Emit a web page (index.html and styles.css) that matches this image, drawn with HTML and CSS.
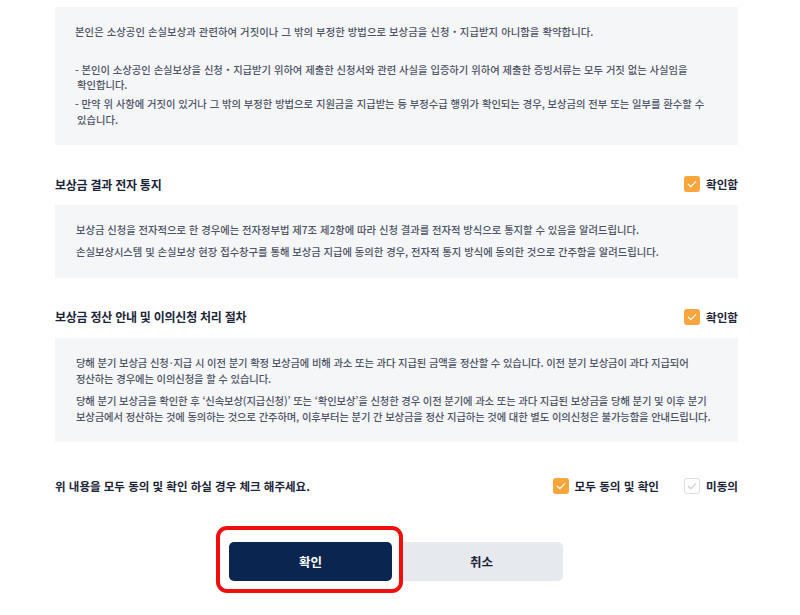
FILE: index.html
```html
<!DOCTYPE html>
<html lang="ko">
<head>
<meta charset="utf-8">
<link rel="stylesheet" href="styles.css">
</head>
<body>
<div class="wrap">
  <div class="box box-first">
    <p class="lead">본인은 소상공인 손실보상과 관련하여 거짓이나 그 밖의 부정한 방법으로 보상금을 신청・지급받지 아니함을 확약합니다.</p>
    <p class="item">- 본인이 소상공인 손실보상을 신청・지급받기 위하여 제출한 신청서와 관련 사실을 입증하기 위하여 제출한 증빙서류는 모두 거짓 없는 사실임을<br>확인합니다.</p>
    <p class="item">- 만약 위 사항에 거짓이 있거나 그 밖의 부정한 방법으로 지원금을 지급받는 등 부정수급 행위가 확인되는 경우, 보상금의 전부 또는 일부를 환수할 수<br>있습니다.</p>
  </div>

  <div class="head-row">
    <h2 class="title">보상금 결과 전자 통지</h2>
    <label class="check"><span class="cb on"><svg viewBox="0 0 16 16"><path d="M4.3 8.2l2.6 2.5 4.8-5"/></svg></span><span class="check-label">확인함</span></label>
  </div>
  <div class="box">
    <p class="para">보상금 신청을 전자적으로 한 경우에는 전자정부법 제7조 제2항에 따라 신청 결과를 전자적 방식으로 통지할 수 있음을 알려드립니다.</p>
    <p class="para">손실보상시스템 및 손실보상 현장 접수창구를 통해 보상금 지급에 동의한 경우, 전자적 통지 방식에 동의한 것으로 간주함을 알려드립니다.</p>
  </div>

  <div class="head-row">
    <h2 class="title">보상금 정산 안내 및 이의신청 처리 절차</h2>
    <label class="check"><span class="cb on"><svg viewBox="0 0 16 16"><path d="M4.3 8.2l2.6 2.5 4.8-5"/></svg></span><span class="check-label">확인함</span></label>
  </div>
  <div class="box box-last">
    <p class="para">당해 분기 보상금 신청<span class="mdot">·</span>지급 시 이전 분기 확정 보상금에 비해 과소 또는 과다 지급된 금액을 정산할 수 있습니다. 이전 분기 보상금이 과다 지급되어<br>정산하는 경우에는 이의신청을 할 수 있습니다.</p>
    <p class="para">당해 분기 보상금을 확인한 후 ‘신속보상(지급신청)’ 또는 ‘확인보상’을 신청한 경우 이전 분기에 과소 또는 과다 지급된 보상금을 당해 분기 및 이후 분기<br>보상금에서 정산하는 것에 동의하는 것으로 간주하며, 이후부터는 분기 간 보상금을 정산 지급하는 것에 대한 별도 이의신청은 불가능함을 안내드립니다.</p>
  </div>

  <div class="agree-row">
    <p class="agree-text">위 내용을 모두 동의 및 확인 하실 경우 체크 해주세요.</p>
    <div class="agree-options">
      <label class="check"><span class="cb on"><svg viewBox="0 0 16 16"><path d="M4.3 8.2l2.6 2.5 4.8-5"/></svg></span><span class="check-label">모두 동의 및 확인</span></label>
      <label class="check"><span class="cb off"><svg viewBox="0 0 16 16"><path d="M4.3 8.2l2.6 2.5 4.8-5"/></svg></span><span class="check-label">미동의</span></label>
    </div>
  </div>

  <div class="btn-row">
    <div class="btn-hl">
      <button class="btn btn-primary">확인</button>
      <span class="highlight"></span>
    </div>
    <button class="btn btn-secondary">취소</button>
  </div>
</div>
</body>
</html>
```

FILE: styles.css
```css
* { box-sizing: border-box; }
html, body { margin: 0; padding: 0; background: #ffffff; }
body {
  font-family: "Noto Sans CJK KR", "Noto Sans", sans-serif;
  color: #4b5364;
  min-height: 615px;
}
.wrap {
  width: 683px;
  margin-left: 55px;
  padding-top: 7px;
  padding-bottom: 30px;
}
p { margin: 0; }

.box {
  background: #f5f6f8;
  padding: 17px 6px 18px 21px;
  font-size: 10.3px;
  font-weight: 500;
  letter-spacing: 0;
  line-height: 15.5px;
}
.box-first { padding-left: 20px; }
.box-last { letter-spacing: -0.1px; }
.mdot { font-family: "Noto Sans", sans-serif; padding: 0 1px; }
.lead { margin-bottom: 22px; letter-spacing: 0.1px; }
.item {
  padding-left: 2px;
  text-indent: -2px;
}
.item + .item { margin-top: 3.5px; }
.para + .para { margin-top: 6.5px; }

.head-row {
  display: flex;
  align-items: center;
  justify-content: space-between;
  height: 16px;
  margin-top: 31px;
  margin-bottom: 13px;
}
.title {
  margin: 0;
  font-size: 12px;
  font-weight: 700;
  color: #1c2538;
  letter-spacing: -0.25px;
}
.check {
  display: flex;
  align-items: center;
  gap: 6px;
}
.check-label {
  font-size: 11.6px;
  font-weight: 700;
  color: #1c2538;
}
.cb {
  width: 16px;
  height: 16px;
  border-radius: 3px;
  display: flex;
}
.cb svg { width: 16px; height: 16px; }
.cb path { fill: none; stroke-width: 1.2; stroke-linecap: round; stroke-linejoin: round; }
.cb.on { background: #f8a63c; }
.cb.on path { stroke: #ffffff; }
.cb.off { background: #ffffff; border: 1px solid #dcdfe4; }
.cb.off svg { margin: -1px; }
.cb.off path { stroke: #c9cdd3; }

.agree-row {
  display: flex;
  align-items: center;
  justify-content: space-between;
  height: 16px;
  margin-top: 36px;
}
.agree-text {
  font-size: 11.5px;
  font-weight: 700;
  color: #1c2538;
}
.agree-options {
  display: flex;
  gap: 25px;
}

.btn-row {
  display: flex;
  justify-content: center;
  gap: 8px;
  margin-top: 48px;
  margin-left: -1px;
}
.btn-hl { position: relative; }
.btn {
  width: 163px;
  height: 39px;
  border: 0;
  border-radius: 5px;
  font-family: inherit;
  font-size: 12.5px;
  font-weight: 700;
  display: block;
}
.btn-primary { background: #0b2551; color: #ffffff; }
.btn-secondary { background: #e6e9ed; color: #1c2538; }
.highlight {
  position: absolute;
  left: -13px;
  top: -16px;
  right: -11px;
  bottom: -12px;
  border: 4px solid #f20d0d;
  border-radius: 11px;
  pointer-events: none;
}
```
